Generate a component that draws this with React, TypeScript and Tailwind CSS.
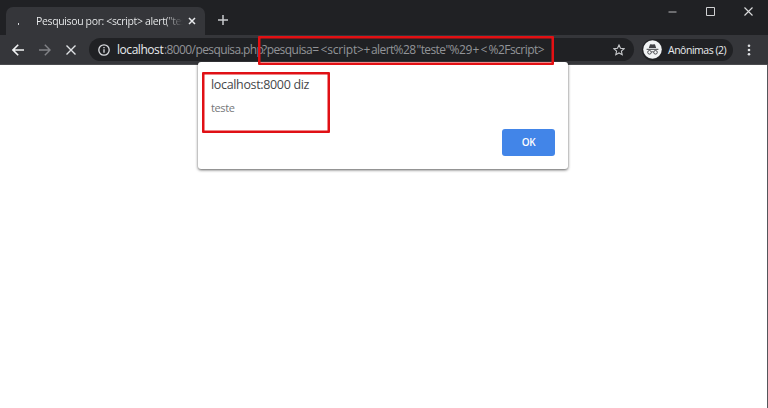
import React from "react";

const urlParts: { text: string; className: string }[] = [
  { text: "localhost", className: "w-[47px] text-[#e8eaed] tracking-[-0.45px]" },
  { text: ":8000/pesquisa.php", className: "w-[98px] tracking-[-0.6px]" },
  { text: "?pesquisa=", className: "w-[58.5px] tracking-[-0.55px]" },
  { text: "<script>", className: "w-[43px] tracking-[-0.2px]" },
  { text: "+", className: "w-[7.5px]" },
  { text: "alert%28", className: "w-[45.5px] tracking-[-0.6px]" },
  { text: '"teste"', className: "w-[33px] tracking-[-0.6px]" },
  { text: "%29", className: "w-[23px] tracking-[-0.4px]" },
  { text: "+", className: "w-[8px]" },
  { text: "<", className: "w-[8px]" },
  { text: "%2Fscript>", className: "w-[57px] tracking-[-0.52px]" },
];

function TabStrip() {
  return (
    <header className="flex h-[35px] items-end bg-[#202124] pl-[6px]">
      <div className="flex h-[28px] w-[199px] items-center rounded-t-[7px] bg-[#35363a] pl-[12px]">
        <span className="mt-[5px] h-[2px] w-[1px] bg-[#d5d7da]" />
        <span className="ml-[17px] w-[147px] bg-linear-to-r from-[#f1f3f4] from-88% to-[#35363a] bg-clip-text text-[10.5px] leading-[16px] tracking-[-0.36px] whitespace-nowrap text-transparent">
          Pesquisou por: &lt;script&gt; alert("tes
        </span>
        <svg className="ml-[5px]" width="8" height="8" viewBox="0 0 8 8" stroke="#e8eaed" strokeWidth="1.5">
          <path d="M1 1l6 6M7 1L1 7" />
        </svg>
      </div>
      <svg className="mb-[9px] ml-[12px]" width="12" height="12" viewBox="0 0 12 12" stroke="#c8cacd" strokeWidth="1.5">
        <path d="M6 1v10M1 6h10" />
      </svg>
      <div className="mr-[15px] mb-[19px] ml-auto flex items-center gap-[29px]">
        <svg width="9" height="9" viewBox="0 0 9 9" stroke="#b8b9bb">
          <path d="M.5 5h8" />
        </svg>
        <svg width="9" height="9" viewBox="0 0 9 9" fill="none" stroke="#d0d1d3">
          <path d="M.5.5h8v8h-8z" />
        </svg>
        <svg width="9" height="9" viewBox="0 0 9 9" stroke="#dcddde" strokeWidth="1.1">
          <path d="M.5.5l8 8M8.5.5l-8 8" />
        </svg>
      </div>
    </header>
  );
}

function Incognito() {
  return (
    <svg className="shrink-0" width="19" height="19" viewBox="0 0 19 19">
      <circle cx="9.5" cy="9.5" r="9.3" fill="#f1f3f4" />
      <path d="M5.8 8L7 4.5Q7.2 4 7.8 4.2L9.5 4.6l1.7-.4q.6-.2.8.3L13.2 8z" fill="#404145" />
      <path d="M3.6 9.3h11.8" stroke="#404145" strokeWidth="1" />
      <g fill="none" stroke="#404145" strokeWidth=".9">
        <circle cx="6.5" cy="12.3" r="1.8" />
        <circle cx="12.5" cy="12.3" r="1.8" />
        <path d="M8.3 12.1q1.2-.7 2.4 0" />
      </g>
    </svg>
  );
}

function Toolbar() {
  return (
    <div className="flex h-[30px] items-center border-b border-[#4a4b4e] bg-[#35363a] pl-[12px]">
      <svg width="12" height="12" viewBox="0 0 12 12" fill="none" stroke="#f1f3f4" strokeWidth="1.6">
        <path d="M12 6H1.2M6.2.8L1 6l5.2 5.2" />
      </svg>
      <svg className="ml-[15px]" width="12" height="12" viewBox="0 0 12 12" fill="none" stroke="#818286" strokeWidth="1.4">
        <path d="M0 6h10.8M5.8.8L11 6l-5.2 5.2" />
      </svg>
      <svg className="ml-[15px]" width="10" height="10" viewBox="0 0 10 10" stroke="#e0e2e5" strokeWidth="1.4">
        <path d="M.5.5l9 9M9.5.5l-9 9" />
      </svg>
      <div className="ml-[13px] flex h-[23px] w-[545px] items-center rounded-full bg-[#202124] pl-[9px]">
        <svg width="12" height="12" viewBox="0 0 12 12" fill="none" stroke="#dadce0" strokeWidth="1.3">
          <circle cx="6" cy="6" r="5.2" />
          <path d="M6 5.2v3.5M6 3v1.3" />
        </svg>
        <div className="ml-[7px] flex text-[12px] leading-[18px] text-[#929498]">
          {urlParts.map((part, i) => (
            <span key={i} className={"shrink-0 whitespace-nowrap " + part.className}>
              {part.text}
            </span>
          ))}
        </div>
        <svg className="mr-[9px] ml-auto" width="12" height="12" viewBox="0 0 12 12" fill="none" stroke="#c8cacd" strokeWidth="1.1">
          <path d="M6 1l1.5 3.3 3.6.4-2.7 2.4.8 3.6L6 8.9l-3.2 1.8.8-3.6L.9 4.7l3.6-.4z" />
        </svg>
      </div>
      <div className="ml-[8px] flex h-[22px] w-[91px] items-center rounded-full bg-[#202124] pl-px">
        <Incognito />
        <span className="ml-[6px] text-[10.5px] leading-[16px] font-medium tracking-[-0.48px] whitespace-nowrap text-[#e8eaed]">
          Anônimas (2)
        </span>
      </div>
      <svg className="ml-[14px]" width="4" height="12" viewBox="0 0 4 12" fill="#e0e2e5">
        <circle cx="2" cy="1.7" r="1.3" />
        <circle cx="2" cy="6" r="1.3" />
        <circle cx="2" cy="10.3" r="1.3" />
      </svg>
    </div>
  );
}

function AlertDialog() {
  return (
    <section className="absolute top-[62px] left-[198px] flex h-[107px] w-[370px] flex-col rounded-[3px] bg-white px-[13px] pt-[14px] pb-[13px] shadow-[0_1px_3px_rgba(0,0,0,0.65)]">
      <h1 className="text-[12.5px] leading-[18px] tracking-[-0.34px] text-[#46474a]">localhost:8000 diz</h1>
      <p className="mt-[6px] text-[11px] leading-[16px] tracking-[-0.4px] text-[#75777a]">teste</p>
      <button className="mt-auto h-[27px] w-[53px] self-end rounded-[3px] bg-[#4285e8] text-[10px] font-semibold tracking-[-0.4px] text-white">
        OK
      </button>
    </section>
  );
}

export default function App() {
  return (
    <main className="relative h-[408px] w-[768px] overflow-hidden bg-white font-['Open_Sans','Noto_Sans',sans-serif]">
      <TabStrip />
      <Toolbar />
      <div className="ml-auto h-[343px] w-px bg-[#55565a]" />
      <AlertDialog />
      <div className="absolute top-[36px] left-[258px] h-[29px] w-[296px] rounded-[1px] shadow-[inset_0_0_0_2.5px_#e31013]" />
      <div className="absolute top-[72px] left-[202px] h-[61px] w-[128px] rounded-[1px] shadow-[inset_0_0_0_2.5px_#e01015]" />
    </main>
  );
}
